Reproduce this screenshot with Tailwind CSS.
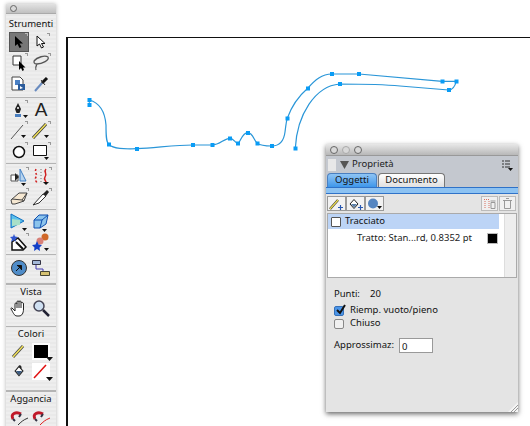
<!DOCTYPE html>
<html lang="it">
<head>
    <meta charset="UTF-8">
    <title>Proprietà</title>
    <script src="https://cdn.jsdelivr.net/npm/@tailwindcss/browser@4"></script>
</head>
<body class="bg-white w-[530px] h-[426px] overflow-hidden relative font-['Noto_Sans',sans-serif] text-[9.5px] text-[#222]">

    <!-- documento -->
    <div class="absolute left-[66px] top-[37px] w-[470px] h-[400px] border-l-2 border-t border-[#111]"></div>

    <svg class="absolute left-0 top-0" width="530" height="426" fill="none">
        <path stroke="#2a96d8" stroke-width="1.2" d="M89.3 100C100 103 105 112 106 125C106 135 106 142 108.7 144.3C113 149 125 149 137 148.7C155 148 175 145 192.7 145L212.3 145C220 145 224 138.3 230 138.3C234 138.3 235 143.3 237.7 143.3C240 143.3 242 132.7 247.7 132.7C253 132.7 254 141 257.3 143.3C261 146 267 146 271.7 146C280 146 284 140 285 132C286 125 286 122 287.3 118.3C292 105 300 95 307.7 88.3C315 80 322 74 331.7 74L359 74L442.3 81.3L456.3 81.3C455 86 452 90 448.7 90L400 86C380 84 360 84 339.7 84C315 86 297 115 295.3 148.3"/>
        <path stroke="#2a96d8" d="M89.3 100V105"/>
        <g fill="#0a9cf5">
            <rect x="87.5" y="98" width="4" height="4"/><rect x="87.5" y="103" width="4" height="4"/>
            <rect x="107" y="142.5" width="4" height="4"/><rect x="135" y="147" width="4" height="4"/>
            <rect x="191" y="143" width="4" height="4"/><rect x="210.500" y="143" width="4" height="4"/>
            <rect x="228" y="136.500" width="4" height="4"/><rect x="236" y="141.500" width="4" height="4"/>
            <rect x="246" y="131" width="4" height="4"/><rect x="255.500" y="141.500" width="4" height="4"/>
            <rect x="270" y="144" width="4" height="4"/><rect x="285.500" y="116.500" width="4" height="4"/>
            <rect x="306" y="86.500" width="4" height="4"/><rect x="330" y="72" width="4" height="4"/>
            <rect x="357" y="72" width="4" height="4"/><rect x="440.500" y="79.500" width="4" height="4"/>
            <rect x="454.500" y="79.500" width="4" height="4"/><rect x="447" y="88" width="4" height="4"/>
            <rect x="338" y="82" width="4" height="4"/><rect x="293.500" y="146.500" width="4" height="4"/>
        </g>
    </svg>

    <!-- pannello strumenti -->
    <div class="absolute left-[6px] top-[4px] w-[50px] h-[430px] flex flex-col shadow-[0_0_4px_rgba(0,0,0,0.3)] bg-[repeating-linear-gradient(#eeeeee_0,#eeeeee_2px,#e9e9e9_2px,#e9e9e9_4px)]">
        <div class="h-[10px] shrink-0 bg-gradient-to-b from-[#e2e2e2] to-[#c0c0c0] border-b border-[#aaa] flex items-center pl-[4px]">
            <span class="w-[7px] h-[7px] rounded-full border border-[#666] bg-[#d8d8d8]"></span>
        </div>
        <div class="h-[17px] shrink-0 text-center leading-[19px] text-[#111]">Strumenti</div>

        <div class="grid grid-cols-2 grid-rows-[repeat(3,21px)] pl-[2px] pr-[4px] shrink-0">
            <div class="relative flex items-center justify-center"><div class="w-[20px] h-[20px] bg-[#777] border border-[#555] flex items-center justify-center">
                <svg width="14" height="14" viewBox="0 0 14 14"><path fill="#000" d="M3 1L3 11L5.500 9L7.500 13L9.500 12L7.500 8.500L11 8.500Z"/></svg>
            </div><i class="absolute right-[2px] top-[2px] w-[3px] h-[3px] border-t border-r border-[#bbb]"></i></div>
            <div class="relative flex items-center justify-center">
                <svg width="14" height="14" viewBox="0 0 14 14"><path fill="#fff" stroke="#111" d="M3 1L3 11L5.500 9L7.500 13L9.500 12L7.500 8.500L11 8.500Z"/></svg>
                <i class="absolute right-[2px] top-[2px] w-[3px] h-[3px] border-t border-r border-[#999]"></i>
            </div>
            <div class="relative flex items-center justify-center">
                <svg width="18" height="18" viewBox="0 0 18 18"><path fill="#fff" stroke="#333" d="M3 2H11V11H3Z"/><path fill="#000" d="M9 7V16L11 14L12.500 17L14 16L13 13.500H15.500Z"/></svg>
                <i class="absolute right-[2px] top-[1px] w-[3px] h-[3px] border-t border-r border-[#999]"></i>
            </div>
            <div class="relative flex items-center justify-center">
                <svg width="20" height="18" viewBox="0 0 20 18" fill="none"><path stroke="#555" stroke-width="1.3" d="M3 7C6 3 14 1 17 3C19 6 11 10 6 10C3 10 2 8 4 6M6 10C5 12 4 13 5 16"/></svg>
                <i class="absolute right-[1px] top-[1px] w-[3px] h-[3px] border-t border-r border-[#999]"></i>
            </div>
            <div class="flex items-center justify-center">
                <svg width="18" height="18" viewBox="0 0 18 18"><path fill="#fff" stroke="#444" d="M2 2H10L13 5V15H2Z"/><path fill="#4a80c4" d="M5 5H10V10H5Z"/><path fill="#2b5c9c" d="M8 9H15V15H8Z"/><path fill="#fff" d="M10 11L13 13L10 14Z"/></svg>
            </div>
            <div class="flex items-center justify-center">
                <svg width="18" height="18" viewBox="0 0 18 18" fill="none"><path stroke="#6a8cc0" stroke-width="2" d="M3 16L10 8"/><path stroke="#111" stroke-width="3" d="M10 8L15 3"/><path stroke="#333" d="M9 5L13 10"/></svg>
            </div>
        </div>
        <div class="mt-[3px] mb-[1px] h-px bg-[#b4b4b4] shrink-0"></div>

        <div class="grid grid-cols-2 grid-rows-[repeat(3,21px)] pl-[2px] pr-[4px] shrink-0">
            <div class="relative flex items-center justify-center">
                <svg width="18" height="20" viewBox="0 0 18 20"><path fill="#222" d="M8 3L11 9L9.500 13H6.500L5 9Z"/><circle cx="8" cy="8" r="1" fill="#fff"/><path fill="#4a7fc0" d="M5 14H11V17H5Z"/><path fill="#111" d="M13 15H18L15.500 18Z"/></svg>
                <i class="absolute right-[2px] top-[1px] w-[3px] h-[3px] border-t border-r border-[#999]"></i>
            </div>
            <div class="flex items-center justify-center text-[19px] leading-none text-[#222] font-['Liberation_Sans',sans-serif]">A</div>
            <div class="relative flex items-center justify-center">
                <svg width="20" height="18" viewBox="0 0 20 18" fill="none"><path stroke="#555" d="M2 17L14 3"/><path fill="#111" d="M12 13H17L14.500 16Z"/></svg>
                <i class="absolute right-[2px] top-[1px] w-[3px] h-[3px] border-t border-r border-[#999]"></i>
            </div>
            <div class="relative flex items-center justify-center">
                <svg width="20" height="18" viewBox="0 0 20 18" fill="none"><path stroke="#333" stroke-width="3" d="M2 16L15 2"/><path stroke="#f2e25a" stroke-width="1.500" d="M2 16L15 2"/><path fill="#111" d="M13 13H18L15.500 16Z"/></svg>
                <i class="absolute right-[1px] top-[1px] w-[3px] h-[3px] border-t border-r border-[#999]"></i>
            </div>
            <div class="relative flex items-center justify-center">
                <svg width="16" height="16" viewBox="0 0 16 16"><circle cx="8" cy="8" r="5.500" fill="#fff" stroke="#111" stroke-width="1.500"/></svg>
                <i class="absolute right-[2px] top-[1px] w-[3px] h-[3px] border-t border-r border-[#999]"></i>
            </div>
            <div class="relative flex items-center justify-center">
                <svg width="20" height="20" viewBox="0 0 20 20"><path fill="#fff" stroke="#111" d="M2.500 3.500H15.500V13.500H2.500Z"/><path fill="#111" d="M13 15H18L15.500 18Z"/></svg>
                <i class="absolute right-[1px] top-[1px] w-[3px] h-[3px] border-t border-r border-[#999]"></i>
            </div>
        </div>
        <div class="mt-[1px] mb-[2px] h-px bg-[#b4b4b4] shrink-0"></div>

        <div class="grid grid-cols-2 grid-rows-[repeat(2,21px)] pl-[2px] pr-[4px] shrink-0">
            <div class="relative flex items-center justify-center">
                <svg width="20" height="20" viewBox="0 0 20 20"><path fill="#fff" stroke="#555" d="M2 8H9V14H2Z"/><path fill="#222" d="M6 6L10 10L6 14Z"/><path fill="#b8d4ee" stroke="#3f7fc4" d="M11 2L17 14H11Z"/><path fill="#111" d="M12 16H17L14.500 19Z"/></svg>
                <i class="absolute right-[1px] top-[1px] w-[3px] h-[3px] border-t border-r border-[#999]"></i>
            </div>
            <div class="relative flex items-center justify-center">
                <svg width="20" height="20" viewBox="0 0 20 20" fill="none"><path stroke="#d02020" stroke-width="1.500" stroke-dasharray="2 2" d="M5 2C3 6 7 7 5 10C3 13 6 15 6 16"/><path stroke="#d02020" stroke-width="1.500" d="M15 2C12 5 17 7 14 10C12 13 16 14 15 16"/><path stroke="#777" stroke-dasharray="1 2" d="M10 2V16"/><path fill="#111" d="M12 15H18L15 18Z"/></svg>
                <i class="absolute right-[0px] top-[1px] w-[3px] h-[3px] border-t border-r border-[#999]"></i>
            </div>
            <div class="relative flex items-center justify-center">
                <svg width="20" height="16" viewBox="0 0 20 16"><path fill="#f6e8d2" stroke="#444" d="M2 10L10 3H18L15 11L6 14H3Z"/><path fill="none" stroke="#444" d="M3 9L13 10L15 11M13 10L18 3"/></svg>
                <i class="absolute right-[1px] top-[1px] w-[3px] h-[3px] border-t border-r border-[#999]"></i>
            </div>
            <div class="relative flex items-center justify-center">
                <svg width="20" height="18" viewBox="0 0 20 18"><path fill="#fff" stroke="#333" d="M2 16L12 5L15 7L8 14Z"/><path fill="#222" d="M12 5L16 1L18 3L15 7Z"/></svg>
                <i class="absolute right-[0px] top-[1px] w-[3px] h-[3px] border-t border-r border-[#999]"></i>
            </div>
        </div>
        <div class="mt-[1px] mb-[1px] h-px bg-[#b4b4b4] shrink-0"></div>

        <div class="grid grid-cols-2 grid-rows-[repeat(2,21px)] pl-[2px] pr-[4px] shrink-0">
            <div class="flex items-center justify-center">
                <svg width="22" height="20" viewBox="0 0 22 20"><path fill="#5ac0ec" stroke="#0f6fc0" d="M3 2L16 9L3 16Z"/><path fill="#a8e0c8" d="M4 7L12 8V13L4 14Z"/><path fill="#111" d="M14 16H19L16.500 19Z"/></svg>
            </div>
            <div class="flex items-center justify-center">
                <svg width="20" height="20" viewBox="0 0 20 20"><path fill="#8cc4ec" stroke="#0f4fb0" d="M3 8L8 3H17L15 12L9 16H3Z"/><path fill="none" stroke="#0f4fb0" d="M3 8H11L17 3M11 8L9 16"/><path fill="#111" d="M11 17H16L13.500 20Z" /></svg>
            </div>
            <div class="relative flex items-center justify-center">
                <svg width="20" height="20" viewBox="0 0 20 20"><path fill="#fff" stroke="#111" stroke-width="1.500" d="M3 9L9 5L17 14L14 17H3Z"/><path stroke="#111" stroke-width="2" d="M7 9L14 16"/><path fill="#2f55d0" d="M5 1L6 3.500L9 4L6.500 6L7 9L5 7L2 9L3 6L1 4L4 3.500Z"/></svg>
                <i class="absolute right-[1px] top-[1px] w-[3px] h-[3px] border-t border-r border-[#999]"></i>
            </div>
            <div class="relative flex items-center justify-center">
                <svg width="20" height="20" viewBox="0 0 20 20"><circle cx="14" cy="4" r="3.500" fill="#d06828"/><circle cx="9" cy="8" r="3.500" fill="#d88078"/><path fill="#1340c8" d="M6 8L7.500 11.500L11 12L8.500 14.500L9 18L6 16L3 18L3.500 14.500L1 12L4.500 11.500Z"/><path fill="#111" d="M13 15H18L15.500 18Z"/></svg>
            </div>
        </div>
        <div class="mt-[1px] mb-[2px] h-px bg-[#b4b4b4] shrink-0"></div>

        <div class="grid grid-cols-2 grid-rows-[21px] pl-[2px] pr-[4px] shrink-0">
            <div class="relative flex items-center justify-center">
                <svg width="18" height="18" viewBox="0 0 18 18"><circle cx="9" cy="9" r="7.500" fill="#4f8cc8" stroke="#333"/><path fill="#111" stroke="#111" d="M6 12L11 7M7 6.500H11.500V11"/></svg>
            </div>
            <div class="flex items-center justify-center">
                <svg width="20" height="18" viewBox="0 0 20 18" fill="none"><path fill="#a4b8d8" stroke="#334" d="M1.500 1.500H9.500V5.500H1.500Z"/><path stroke="#4038b0" d="M5 6V10H12V13"/><path fill="#d4c070" stroke="#443" d="M9.500 12.500H18.500V16.500H9.500Z"/></svg>
            </div>
        </div>
        <div class="mt-[5px] h-[2px] bg-[#b4b4b4] shrink-0"></div>

        <div class="h-[13px] shrink-0 text-center leading-[13px] text-[#111]">Vista</div>
        <div class="grid grid-cols-2 grid-rows-[20px] pl-[2px] pr-[4px] shrink-0">
            <div class="flex items-center justify-center">
                <svg width="18" height="18" viewBox="0 0 18 18"><path fill="#fff" stroke="#222" stroke-linejoin="round" d="M2 9L5 12V5C5 3.500 7 3.500 7 5V3C7 1.500 9 1.500 9 3V3C9 1.500 11 1.500 11 3V4C11 3 13.500 3 13.500 5V10C13.500 14 12 17 9 17H7C4 17 3 13 1 10C1 9 1.500 8.500 2 9Z"/><path stroke="#222" d="M7 5V9M9 3V9M11 4V9"/></svg>
            </div>
            <div class="flex items-center justify-center">
                <svg width="18" height="18" viewBox="0 0 18 18" fill="none"><circle cx="7" cy="7" r="5" fill="#cfe0f2" stroke="#445" stroke-width="1.500"/><path stroke="#223" stroke-width="2.500" d="M11 11L17 17"/></svg>
            </div>
        </div>
        <div class="mt-[8px] h-px bg-[#b4b4b4] shrink-0"></div>

        <div class="h-[14px] shrink-0 text-center leading-[14px] text-[#111]">Colori</div>
        <div class="grid grid-cols-2 grid-rows-[repeat(2,20px)] pl-[2px] pr-[4px] shrink-0">
            <div class="flex items-center justify-center">
                <svg width="18" height="18" viewBox="0 0 18 18" fill="none"><path stroke="#444" stroke-width="3" d="M3 15L13 4"/><path stroke="#f2e25a" stroke-width="1.500" d="M3 15L13 4"/></svg>
            </div>
            <div class="flex items-center justify-center">
                <div class="w-[18px] h-[17px] bg-white p-[2px] relative"><div class="w-full h-full bg-black"></div>
                    <svg class="absolute right-[-3px] bottom-[-1px]" width="7" height="4" viewBox="0 0 7 4"><path fill="#111" d="M0 0H7L3.500 4Z"/></svg>
                </div>
            </div>
            <div class="flex items-center justify-center">
                <svg width="14" height="14" viewBox="0 0 18 18"><path fill="#fff" stroke="#222" stroke-width="1.500" d="M4 9L9 3L14 9L9 15Z"/><path fill="#3a5a80" d="M5 9H13L9 14Z"/><path fill="#222" d="M9 2C11 1 13 3 12 6L10 5Z"/></svg>
            </div>
            <div class="flex items-center justify-center">
                <div class="w-[18px] h-[17px] bg-white relative">
                    <svg class="absolute left-0 top-0" width="18" height="17" viewBox="0 0 18 17"><path stroke="#e01010" stroke-width="1.500" d="M2 15L14 2"/></svg>
                    <svg class="absolute right-[-3px] bottom-[-1px]" width="7" height="4" viewBox="0 0 7 4"><path fill="#111" d="M0 0H7L3.500 4Z"/></svg>
                </div>
            </div>
        </div>
        <div class="mt-[9px] h-[2px] bg-[#b4b4b4] shrink-0"></div>

        <div class="h-[15px] shrink-0 text-center leading-[14px] text-[#111]">Aggancia</div>
        <div class="grid grid-cols-2 grid-rows-[21px] pl-[2px] pr-[4px] shrink-0">
            <div class="flex items-center justify-center">
                <svg width="20" height="18" viewBox="0 0 20 18" fill="none"><path stroke="#c01828" stroke-width="3" d="M4 10C1 5 7 2 12 5"/><path stroke="#334" stroke-width="2" d="M4 10L6 12M12 5L10 8"/><path stroke="#333" d="M9 16C12 13 14 11 19 9"/></svg>
            </div>
            <div class="flex items-center justify-center">
                <svg width="20" height="18" viewBox="0 0 20 18" fill="none"><path stroke="#c01828" stroke-width="3" d="M4 10C1 5 7 2 12 5"/><path stroke="#334" stroke-width="2" d="M4 10L6 12M12 5L10 8"/><path stroke="#e02020" d="M9 16C12 13 14 11 19 9"/></svg>
            </div>
        </div>
    </div>

    <!-- pannello proprietà -->
    <div class="absolute left-[326px] top-[144px] w-[192px] h-[268px] flex flex-col bg-[#e4e4e4] shadow-[0_2px_5px_rgba(0,0,0,0.6)]">
        <div class="h-[12px] shrink-0 bg-gradient-to-b from-[#e8e8e8] to-[#b8b8b8] border-b border-[#999] flex items-center gap-[4px] pl-[4px]">
            <span class="w-[8px] h-[8px] rounded-full border border-[#666] bg-[#d8d8d8]"></span>
            <span class="w-[8px] h-[8px] rounded-full border border-[#aaa] bg-[#d8d8d8]"></span>
            <span class="w-[8px] h-[8px] rounded-full border border-[#666] bg-[#d8d8d8]"></span>
        </div>
        <div class="h-[38px] shrink-0 bg-[#c4c8cf] flex flex-col">
            <div class="h-[17px] flex items-center pl-[2px] pr-[5px] text-[#222]">
                <div class="w-[8px] h-[12px] bg-[radial-gradient(#e8e8e8_1px,transparent_1px)] bg-[length:2px_2px]"></div>
                <svg class="ml-[4px] mr-[3px]" width="9" height="8" viewBox="0 0 9 8"><path fill="#555" d="M0 0H9L4.500 8Z"/></svg>
                <span>Proprietà</span>
                <svg class="ml-auto" width="11" height="12" viewBox="0 0 11 12"><path stroke="#333" d="M0 2H2M3 2H8M0 5H2M3 5H8M0 8H2M3 8H8"/><path fill="#111" d="M6 9H11L8.500 12Z"/></svg>
            </div>
            <div class="h-[14px] flex pl-[1px] gap-[1px] items-stretch">
                <div class="w-[50px] rounded-t-[4px] border border-b-0 border-[#4a7fc0] bg-gradient-to-b from-[#8ec4f4] to-[#3d97ea] text-center leading-[12px] text-[#111]">Oggetti</div>
                <div class="w-[67px] rounded-t-[4px] border border-b-0 border-[#777] bg-gradient-to-b from-white to-[#e0e0e0] text-center leading-[12px] text-[#111]">Documento</div>
            </div>
            <div class="h-[7px] border-y border-[#2f72c8] bg-[#8cc2f2]"></div>
        </div>
        <div class="h-[19px] shrink-0 flex items-center px-[1px] bg-[#e4e4e4]">
            <div class="w-[19px] h-[15px] bg-[#f2f2f2] border border-[#999] flex items-center justify-center">
                <svg width="15" height="12" viewBox="0 0 15 12" fill="none"><path stroke="#333" stroke-width="2.500" d="M1 11L9 2"/><path stroke="#f0e050" stroke-width="1.200" d="M1 11L9 2"/><path stroke="#2858b0" stroke-width="1.200" d="M9 9.500H14M11.500 7V12"/></svg>
            </div>
            <div class="w-[19px] h-[15px] bg-[#f2f2f2] border border-[#999] flex items-center justify-center">
                <svg width="16" height="12" viewBox="0 0 16 12"><path fill="#fff" stroke="#222" d="M2 6L6 1.500L10 6L6 10.500Z"/><path fill="#5a7fa8" d="M3 6H9L6 9.500Z"/><path stroke="#2858b0" stroke-width="1.200" d="M10 9.500H15M12.500 7V12"/></svg>
            </div>
            <div class="w-[19px] h-[15px] bg-[#f2f2f2] border border-[#999] flex items-center justify-center">
                <svg width="16" height="12" viewBox="0 0 16 12"><circle cx="6" cy="5.500" r="5" fill="#5585c0"/><path fill="#111" d="M10 8H15L12.500 11Z"/></svg>
            </div>
            <div class="ml-auto flex mr-[1px]">
                <div class="w-[17px] h-[15px] bg-[#f0f0f0] border border-[#bbb] flex items-center justify-center">
                    <svg width="13" height="11" viewBox="0 0 13 11" fill="none"><path stroke="#d87060" stroke-dasharray="1 1" d="M1 1.500H7M2 3V10M6 3V10"/><path stroke="#999" d="M8 4.500H12V10.500H8ZM7.500 3H12.500"/></svg>
                </div>
                <div class="w-[17px] h-[15px] bg-[#f0f0f0] border border-[#bbb] ml-[1px] flex items-center justify-center">
                    <svg width="11" height="11" viewBox="0 0 11 11" fill="none"><path stroke="#999" d="M2.500 2.500V10.500H8.500V2.500M1 2.500H10M4 .500H7"/></svg>
                </div>
            </div>
        </div>

        <div class="mx-[1px] h-[65px] shrink-0 bg-white border border-[#aaa] flex">
            <div class="flex-1">
                <div class="h-[15px] mr-[5px] bg-[#bcd4f6] flex items-center pl-[3px] text-[#111]">
                    <span class="w-[10px] h-[10px] border border-[#555] bg-white rounded-[1px] mr-[4px]"></span>Tracciato
                </div>
                <div class="mt-[1px] h-[16px] flex items-center pl-[29px] pr-[6px] text-[#222]">
                    <span>Tratto: Stan...rd, 0.8352 pt</span>
                    <span class="ml-auto w-[11px] h-[11px] bg-black border border-[#bbb]"></span>
                </div>
            </div>
            <div class="w-[12px] border-l border-[#ddd] bg-[#eee]"></div>
        </div>

        <div class="flex flex-col pl-[8px] text-[#111]">
            <div class="mt-[9px] h-[15px] flex items-center">
                <span class="w-[36px]">Punti:</span><span>20</span>
            </div>
            <div class="mt-[2px] h-[13px] flex items-center">
                <span class="w-[10px] h-[10px] rounded-[2px] bg-[#4b95e8] border border-[#3570b8] mr-[6px] relative">
                    <svg class="absolute left-0 top-[-4px]" width="12" height="12" viewBox="0 0 12 12" fill="none"><path stroke="#111" stroke-width="2" d="M2 7L5 10L10 2"/></svg>
                </span>Riemp. vuoto/pieno
            </div>
            <div class="h-[13px] flex items-center">
                <span class="w-[10px] h-[10px] rounded-[2px] bg-[#f0f0f0] border border-[#888] mr-[6px]"></span>Chiuso
            </div>
            <div class="mt-[8px] flex items-center">
                <span class="w-[65px]">Approssimaz:</span>
                <span class="w-[34px] h-[15px] bg-white border border-[#999] pl-[2px] leading-[15px]">0</span>
            </div>
        </div>

        <svg class="absolute right-0 bottom-0" width="10" height="10" viewBox="0 0 10 10"><path fill="#f4f4f4" d="M0 10L10 0V10Z"/><path stroke="#999" d="M3 10L10 3M6 10L10 6"/></svg>
    </div>
</body>
</html>
